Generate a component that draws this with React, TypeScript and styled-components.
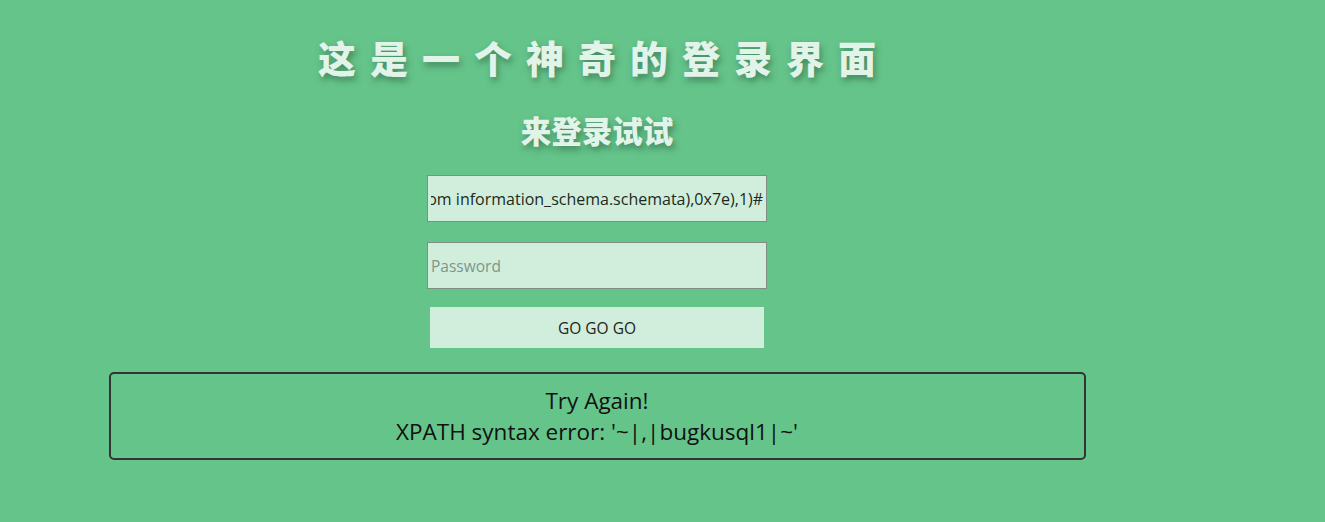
import React, { useLayoutEffect, useRef } from "react";
import styled, { createGlobalStyle } from "styled-components";

const Global = createGlobalStyle`
  html, body { margin: 0; padding: 0; background: #65c48a; }
  body { font-family: "Open Sans", "Noto Sans", "Noto Sans CJK SC", sans-serif; }
`;

const Page = styled.div`
  width: 1194px;
  display: flex;
  flex-direction: column;
  align-items: center;
  padding-top: 28px;
`;

const Title = styled.h1`
  margin: 0;
  font-family: "Noto Sans CJK SC", sans-serif;
  font-size: 38px;
  font-weight: 900;
  line-height: 58px;
  letter-spacing: 14px;
  padding-left: 14px;
  color: #e2f4e9;
  text-shadow: 2px 4px 6px rgba(40, 90, 60, 0.55);
`;

const Subtitle = styled.h2`
  margin: 24px 0 0;
  font-family: "Noto Sans CJK SC", sans-serif;
  font-size: 30.5px;
  font-weight: 900;
  line-height: 40px;
  color: #e2f4e9;
  text-shadow: 2px 4px 6px rgba(40, 90, 60, 0.55);
`;

const Form = styled.form`
  margin-top: 25px;
  display: flex;
  flex-direction: column;
  align-items: center;
`;

const Field = styled.input`
  box-sizing: border-box;
  width: 340px;
  height: 47px;
  margin-bottom: 20px;
  padding: 0 3px;
  border: 1px solid #7f8f86;
  background: #d1eedd;
  color: #1c2a22;
  font-family: "Open Sans", "Noto Sans", sans-serif;
  font-size: 16px;
  outline: none;
  &::placeholder { color: #7f958a; font-size: 15.5px; }
`;

const Button = styled.button`
  box-sizing: border-box;
  width: 334px;
  height: 41px;
  margin-top: -2px;
  border: none;
  background: #d1eedd;
  color: #222;
  font-family: "Open Sans", "Noto Sans", sans-serif;
  font-size: 15.5px;
  cursor: pointer;
`;

const ErrorBox = styled.div`
  box-sizing: border-box;
  width: 977px;
  height: 88px;
  margin-top: 24px;
  border: 2px solid #333;
  border-radius: 5px;
  display: flex;
  flex-direction: column;
  align-items: center;
  justify-content: center;
  font-family: "Open Sans", "Noto Sans", sans-serif;
  font-size: 22.5px;
  line-height: 31px;
  color: #111;
`;

const payload =
  "admin' and updatexml(1,concat(0x7e,(select group_concat(schema_name) from information_schema.schemata),0x7e),1)#";

export default function App() {
  const ref = useRef<HTMLInputElement>(null);
  useLayoutEffect(() => {
    if (ref.current) ref.current.scrollLeft = ref.current.scrollWidth;
  }, []);
  return (
    <>
      <Global />
      <Page>
        <Title>这是一个神奇的登录界面</Title>
        <Subtitle>来登录试试</Subtitle>
        <Form onSubmit={(e) => e.preventDefault()}>
          <Field ref={ref} type="text" defaultValue={payload} placeholder="Username" />
          <Field type="password" placeholder="Password" />
          <Button type="submit">GO GO GO</Button>
        </Form>
        <ErrorBox>
          <div>Try Again!</div>
          <div>XPATH syntax error: '~|,|bugkusql1|~'</div>
        </ErrorBox>
      </Page>
    </>
  );
}
